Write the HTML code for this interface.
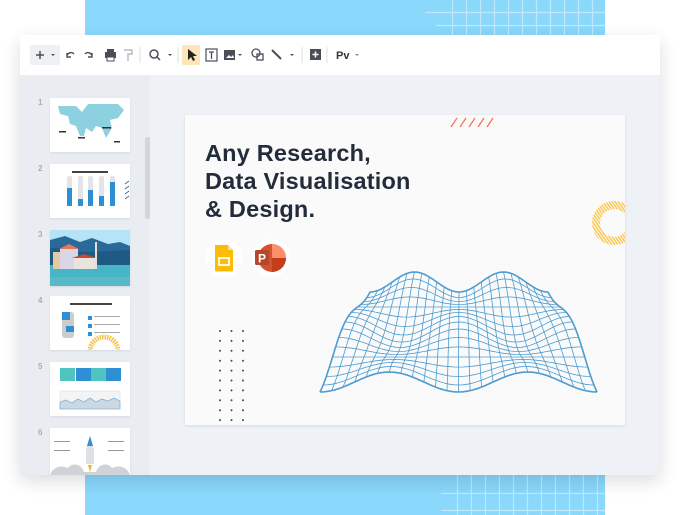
<!DOCTYPE html>
<html><head><meta charset="utf-8"><style>
*{margin:0;padding:0;box-sizing:border-box}
body{width:680px;height:515px;background:#fff;position:relative;overflow:hidden;font-family:"Liberation Sans",sans-serif}
.bg{position:absolute;left:85px;top:0;width:520px;height:515px;background:#8ad8fc}
.win{position:absolute;left:20px;top:35px;width:640px;height:440px;background:#eef1f5;box-shadow:0 6px 18px rgba(0,0,0,.14);border-radius:3px;overflow:hidden}
.tb{position:absolute;left:0;top:0;width:640px;height:40px;background:#fff}
.side{position:absolute;left:0;top:40px;width:130px;height:400px;background:#e9ecf1}
.sb{position:absolute;left:125px;top:62px;width:5px;height:82px;background:#d2d6dc;border-radius:2px}
.num{position:absolute;left:18px;font-size:8px;font-weight:bold;color:#a9afb8}
.th{position:absolute;left:30px;width:80px;background:#fff;box-shadow:0 1px 2px rgba(0,0,0,.08);overflow:hidden}
.slide{position:absolute;left:165px;top:80px;width:440px;height:310px;background:#fafafa;box-shadow:0 1px 3px rgba(0,0,0,.1);overflow:hidden}
h1{position:absolute;left:20px;top:24px;font-size:23.5px;line-height:28px;color:#222c3b;font-weight:bold;letter-spacing:.2px}
.ic{position:absolute;width:38px;height:38px;border-radius:50%;background:#fff}
</style></head><body>
<div class="bg"></div>
<svg style="position:absolute;left:0;top:0" width="680" height="515">
<g stroke="#bfe9fb" stroke-width="1.2">
<line x1="425" y1="12.5" x2="605" y2="12.5"/><line x1="436" y1="25.5" x2="605" y2="25.5"/>
<line x1="441" y1="493.5" x2="605" y2="493.5"/><line x1="441" y1="510.5" x2="605" y2="510.5"/>
<g id="vg"></g></g></svg>
<div class="win">
<div class="tb">
<div style="position:absolute;left:10px;top:10px;width:30px;height:20px;background:#eef0f3;border-radius:2px"></div>
<div style="position:absolute;left:162px;top:10px;width:18px;height:20px;background:#fde5b8;border-radius:2px"></div>
<svg width="640" height="40" style="position:absolute;left:0;top:0" fill="none" stroke="#4a4f57" stroke-width="1.5">
<path d="M16 20h8M20 16v8"/><path d="M31 19l2 2 2-2z" fill="#4a4f57" stroke="none"/>
<path d="M47 22a4 4 0 0 1 7-3M47 18v4h4" stroke-width="1.4"/>
<path d="M72 22a4 4 0 0 0-7-3M72 18v4h-4" stroke-width="1.4"/>
<rect x="85" y="17" width="11" height="6" fill="#4a4f57" stroke="none"/><rect x="87" y="14" width="7" height="3" fill="#4a4f57" stroke="none"/><rect x="87" y="22" width="7" height="4" fill="#fff" stroke="#4a4f57" stroke-width="1"/>
<path d="M104 15h8v4h-4v7" stroke="#b8bcc2"/>
<line x1="120" y1="12" x2="120" y2="28" stroke="#dfe2e6" stroke-width="1"/>
<circle cx="134" cy="19" r="4"/><path d="M137 22l3 3"/><path d="M148 19l2 2 2-2z" fill="#4a4f57" stroke="none"/>
<line x1="158" y1="12" x2="158" y2="28" stroke="#dfe2e6" stroke-width="1"/>
<path d="M168 14l0 11 3-3 2 4 2-1-2-4h4z" fill="#222" stroke="none"/>
<rect x="186" y="14" width="11" height="12" stroke-width="1.2"/><path d="M189 17h5M191.5 17v7" stroke-width="1.3"/>
<rect x="204" y="15" width="11" height="10" fill="#4a4f57" stroke="none"/><path d="M206 23l3-3 2 2 2-2 1 3z" fill="#fff" stroke="none"/><path d="M218 19l2 2 2-2z" fill="#4a4f57" stroke="none"/>
<circle cx="236" cy="18" r="4" stroke-width="1.3"/><rect x="237" y="19" width="6" height="6" stroke-width="1.3"/>
<path d="M252 15l9 9" stroke-width="2"/><path d="M270 19l2 2 2-2z" fill="#4a4f57" stroke="none"/>
<line x1="282" y1="12" x2="282" y2="28" stroke="#dfe2e6" stroke-width="1"/>
<rect x="290" y="14" width="11" height="11" fill="#4a4f57" stroke="none"/><path d="M295.5 16.5v6M292.5 19.5h6" stroke="#fff"/>
<line x1="307" y1="12" x2="307" y2="28" stroke="#dfe2e6" stroke-width="1"/>
<text x="316" y="24" font-size="11" font-weight="bold" fill="#333" stroke="none" font-family="Liberation Sans">Pv</text><path d="M335 19l2 2 2-2z" fill="#888" stroke="none"/>
</svg></div>
<div class="side">
<div class="sb"></div>
<div class="num" style="top:23px">1</div><div class="num" style="top:89px">2</div><div class="num" style="top:155px">3</div><div class="num" style="top:221px">4</div><div class="num" style="top:287px">5</div><div class="num" style="top:353px">6</div>
<div class="th" style="top:23px;height:54px"><svg width="80" height="54"><path d="M8 8h18l6 6 6-8h30l6 6-6 8-8 2 2 8-6 10-4-10-6-2-4 6-6-4-2 8h-4l-4-10-6-2-2-8-8-2z" fill="#8dd0e0"/><rect x="9" y="33" width="7" height="1.5" fill="#333"/><rect x="28" y="39" width="7" height="1.5" fill="#333"/><rect x="52" y="29" width="9" height="1.5" fill="#333"/><rect x="64" y="43" width="6" height="1.5" fill="#333"/></svg></div>
<div class="th" style="top:89px;height:54px"><svg width="80" height="54"><rect x="22" y="7" width="36" height="2" fill="#444"/><g fill="#e4e4e6"><rect x="17" y="12" width="5" height="30" rx="2"/><rect x="28" y="12" width="5" height="30" rx="2"/><rect x="38" y="12" width="5" height="30" rx="2"/><rect x="49" y="12" width="5" height="30" rx="2"/><rect x="60" y="12" width="5" height="30" rx="2"/></g><g fill="#2e8fd4"><rect x="17" y="24" width="5" height="18"/><rect x="28" y="35" width="5" height="7"/><rect x="38" y="26" width="5" height="16"/><rect x="49" y="32" width="5" height="10"/><rect x="60" y="18" width="5" height="24"/></g><path d="M75 20l4-3M75 25l4-3M75 30l4-3M75 35l4-3" stroke="#2a5a9a" stroke-width=".8"/></svg></div>
<div class="th" style="top:155px;height:56px;background:#b6e4f7"><svg width="80" height="56"><path d="M0 10l15-4 15 6 12-4 16 6 12-2 10 4v20H0z" fill="#2a6a9a"/><path d="M0 18l20 0 10 4 50-2v16H0z" fill="#1f5a85"/><rect x="0" y="35" width="80" height="21" fill="#46b5c6"/><rect x="3" y="22" width="18" height="17" fill="#e5c9a0"/><rect x="10" y="19" width="18" height="20" fill="#d9d6e6"/><path d="M9 19l10-5 10 5z" fill="#e47a57"/><rect x="24" y="28" width="22" height="11" fill="#ebe4dc"/><path d="M22 28l12-4 14 4z" fill="#c8463a"/><rect x="45" y="12" width="2" height="27" fill="#e8ded5"/><rect x="0" y="47" width="80" height="9" fill="#5ab9c8"/></svg></div>
<div class="th" style="top:221px;height:54px"><svg width="80" height="54"><rect x="20" y="7" width="42" height="2" fill="#444"/><rect x="12" y="16" width="12" height="26" fill="#ccc" rx="3"/><rect x="12" y="16" width="8" height="8" fill="#2e8fd4"/><rect x="16" y="30" width="8" height="6" fill="#2e8fd4"/><rect x="38" y="20" width="4" height="4" fill="#2e8fd4"/><rect x="38" y="28" width="4" height="4" fill="#2e8fd4"/><rect x="38" y="36" width="4" height="4" fill="#2e8fd4"/><g fill="#aaa"><rect x="44" y="20" width="26" height="1"/><rect x="44" y="28" width="26" height="1"/><rect x="44" y="36" width="26" height="1"/></g><path d="M40 55a14 14 0 0 1 28 0" stroke="#f8c146" stroke-width="5" fill="none" stroke-dasharray="1.5 1"/></svg></div>
<div class="th" style="top:287px;height:54px"><svg width="80" height="54"><rect x="10" y="6" width="15" height="13" fill="#4fc4c0"/><rect x="26" y="6" width="15" height="13" fill="#2e8fd4"/><rect x="41" y="6" width="15" height="13" fill="#4fc4c0"/><rect x="56" y="6" width="15" height="13" fill="#2e8fd4"/><rect x="10" y="29" width="60" height="18" fill="#f2f4f6" stroke="#ddd" stroke-width=".5"/><path d="M10 40l6-2 6 3 6-4 6 3 6-4 6 4 6-3 6 2 6-3 6 3v8H10z" fill="#ccd7df" stroke="#5aa6e0" stroke-width=".6"/></svg></div>
<div class="th" style="top:353px;height:50px"><svg width="80" height="50"><path d="M36 22l4-14 4 14v14h-8z" fill="#dde1e5"/><path d="M37 18l3-10 3 10z" fill="#2e8fd4"/><path d="M38 37h4l-2 7z" fill="#f6b03a"/><path d="M0 50c0-10 10-14 18-10 4-6 14-4 16 4h12c2-8 12-10 16-4 8-4 18 0 18 10z" fill="#cfd3d8"/><g fill="#999"><rect x="4" y="13" width="16" height="1"/><rect x="4" y="22" width="16" height="1"/><rect x="58" y="13" width="16" height="1"/><rect x="58" y="22" width="16" height="1"/></g></svg></div>
</div>
<div class="slide">
<h1>Any Research,<br>Data Visualisation<br>&amp; Design.</h1>
<div class="ic" style="left:20px;top:124px"><svg width="38" height="38"><path d="M10 6h13l5 5v20a1.5 1.5 0 0 1-1.5 1.5h-15A1.5 1.5 0 0 1 10 31z" fill="#fbbc04"/><path d="M23 6v5h5z" fill="#f6e0a0"/><rect x="14" y="19" width="10" height="7" fill="none" stroke="#fff" stroke-width="1.8"/></svg></div>
<div class="ic" style="left:67px;top:124px"><svg width="38" height="38"><circle cx="20" cy="19" r="14" fill="#d35230"/><path d="M20 5a14 14 0 0 1 14 14H20z" fill="#ff8f6b"/><path d="M20 19h14a14 14 0 0 1-14 14z" fill="#c43e1c"/><rect x="3" y="11" width="14" height="15" rx="1.5" fill="#b7472a"/><text x="6" y="23.5" font-size="12" font-weight="bold" fill="#fff" font-family="Liberation Sans">P</text></svg></div>
<svg width="440" height="310" style="position:absolute;left:0;top:0">
<defs><pattern id="hp" width="2.5" height="2.5" patternUnits="userSpaceOnUse" patternTransform="rotate(-35)"><rect width="1.3" height="2.5" fill="#fcc23d"/></pattern></defs>
<g stroke="#f36f57" stroke-width="1.2"><path d="M266 12l6-9M275 12l6-9M284 12l6-9M293 12l6-9M302 12l6-9"/></g>
<path d="M451 108m-22 0a22 22 0 1 0 44 0a22 22 0 1 0-44 0zm8 0a14 14 0 1 1 28 0a14 14 0 1 1-28 0z" transform="translate(-22,0)" fill="url(#hp)" fill-rule="evenodd"/>
<g id="dots" fill="#2d4a6e"></g>
<g id="mesh" fill="none" stroke="#4d9bd0" stroke-width=".8" transform="translate(-185,-115)"></g>
</svg>
</div>
</div>
<script>
var vg=document.getElementById('vg'),s='';
for(var x=452;x<605;x+=14){s+='<line x1="'+x+'.5" y1="0" x2="'+x+'.5" y2="35"/>';}
for(var x=457;x<605;x+=14){s+='<line x1="'+x+'.5" y1="475" x2="'+x+'.5" y2="515"/>';}
vg.innerHTML=s;
var d='';for(var c=0;c<3;c++)for(var r=0;r<10;r++)d+='<circle cx="'+(35+c*11.5)+'" cy="'+(216+r*9.9)+'" r="1"/>';
document.getElementById('dots').innerHTML=d;
function P(u,v){var x=(370-50*v)+u*(178+99*v);var y=282+100*v;var z=10*Math.cos(4*Math.PI*(u-.5))*Math.cos(2*Math.PI*(v-.5));return [x,y-z];}
var m='',N=24,M=16,i,j,p;
for(i=0;i<=N;i++){p='M';for(j=0;j<=40;j++){var q=P(i/N,j/40);p+=q[0].toFixed(1)+' '+q[1].toFixed(1)+(j<40?' L':'');}m+='<path d="'+p+'"'+((i==0||i==N)?' stroke-width="1.6"':'')+'/>';}
for(j=0;j<=M;j++){p='M';for(i=0;i<=60;i++){var q=P(i/60,j/M);p+=q[0].toFixed(1)+' '+q[1].toFixed(1)+(i<60?' L':'');}m+='<path d="'+p+'"'+((j==0||j==M)?' stroke-width="1.6"':'')+'/>';}
document.getElementById('mesh').innerHTML=m;
</script>
</body></html>
